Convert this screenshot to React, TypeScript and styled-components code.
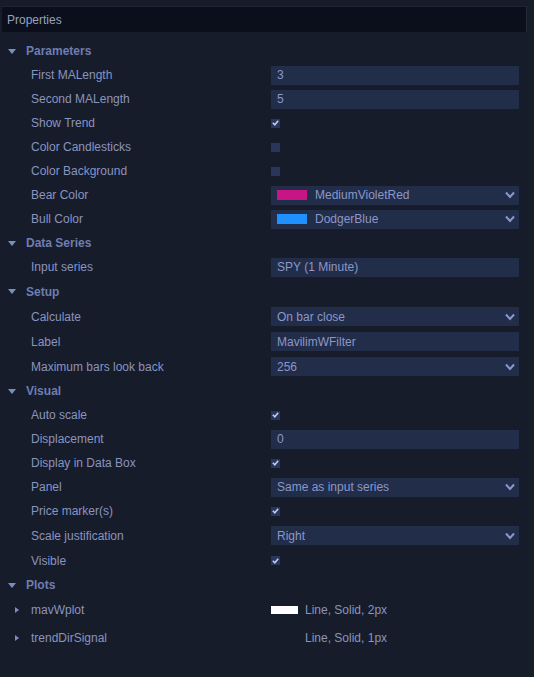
import React from 'react';
import styled, { createGlobalStyle } from 'styled-components';

const GlobalStyle = createGlobalStyle`
	html, body {
		margin: 0;
		padding: 0;
		background: #161c2a;
	}
	body {
		font-family: "Liberation Sans", Arial, sans-serif;
		font-size: 12px;
	}
`;

const Panel = styled.div`
	width: 534px;
	height: 677px;
	background: #161c2a;
	padding-top: 6px;
	box-sizing: border-box;
	overflow: hidden;
`;

const TitleBar = styled.div`
	margin: 0 7px 0 2px;
	height: 26px;
	background: #0a0f1b;
	border-top: 1px solid #1c2333;
	border-right: 1px solid #232a3a;
	display: flex;
	align-items: center;
	padding-left: 5px;
	color: #98a1bf;
	font-size: 12px;
	box-sizing: border-box;
`;

const List = styled.div`
	display: flex;
	flex-direction: column;
	padding-top: 7px;
`;

const SectionHeader = styled.div<{ h?: number }>`
	height: ${({ h }) => h || 24}px;
	display: flex;
	align-items: center;
	padding-left: 8px;
	gap: 10px;
	color: #6e7db2;
	font-weight: bold;
	font-size: 12px;
`;

const Row = styled.div<{ h?: number }>`
	height: ${({ h }) => h || 24}px;
	display: grid;
	grid-template-columns: 271px 248px;
	align-items: center;
`;

const Label = styled.div<{ expander?: boolean }>`
	display: flex;
	align-items: center;
	gap: 12px;
	padding-left: ${({ expander }) => (expander ? '15px' : '31px')};
	color: #8a94bf;
	font-size: 12px;
	white-space: nowrap;
`;

const DownArrow = styled.span`
	width: 0;
	height: 0;
	border-left: 4px solid transparent;
	border-right: 4px solid transparent;
	border-top: 5px solid #7d8cc0;
`;

const RightArrow = styled.span`
	width: 0;
	height: 0;
	border-top: 3.5px solid transparent;
	border-bottom: 3.5px solid transparent;
	border-left: 4px solid #7d8cc0;
`;

const TextBox = styled.div`
	height: 19px;
	background: #222d4a;
	display: flex;
	align-items: center;
	padding-left: 6px;
	color: #8b97c7;
	font-size: 12px;
	box-sizing: border-box;
`;

const Select = styled(TextBox)`
	justify-content: space-between;
	padding-right: 4px;
`;

const SelectValue = styled.div`
	display: flex;
	align-items: center;
	gap: 8px;
`;

const Swatch = styled.span<{ color: string }>`
	width: 30px;
	height: 10px;
	background: ${({ color }) => color};
	display: inline-block;
`;

const Chevron = () => (
	<svg width="10" height="8" viewBox="0 0 10 8">
		<path d="M1 1.5 L5 6 L9 1.5" fill="none" stroke="#8b97d0" strokeWidth="2" />
	</svg>
);

const CheckBox = styled.div`
	width: 9px;
	height: 9px;
	background: #29355a;
	display: flex;
	align-items: center;
	justify-content: center;
`;

const PlotValue = styled.div`
	display: flex;
	align-items: center;
	gap: 7px;
	color: #8a94bf;
	font-size: 12px;
`;

const PlotSwatch = styled.span<{ color?: string }>`
	width: 27px;
	height: 8px;
	background: ${({ color }) => color || 'transparent'};
`;

function Check({ checked }: { checked?: boolean }) {
	return (
		<CheckBox>
			{checked && (
				<svg width="7" height="6" viewBox="0 0 7 6">
					<path d="M0.8 2.8 L2.8 4.8 L6.2 0.8" fill="none" stroke="#c3cbef" strokeWidth="1.6" />
				</svg>
			)}
		</CheckBox>
	);
}

function Section({ title, h }: { title: string; h?: number }) {
	return (
		<SectionHeader h={h}>
			<DownArrow />
			{title}
		</SectionHeader>
	);
}

export default function App() {
	return (
		<Panel>
			<GlobalStyle />
			<TitleBar>Properties</TitleBar>
			<List>
				<Section title="Parameters" />
				<Row>
					<Label>First MALength</Label>
					<TextBox>3</TextBox>
				</Row>
				<Row>
					<Label>Second MALength</Label>
					<TextBox>5</TextBox>
				</Row>
				<Row>
					<Label>Show Trend</Label>
					<Check checked />
				</Row>
				<Row>
					<Label>Color Candlesticks</Label>
					<Check />
				</Row>
				<Row>
					<Label>Color Background</Label>
					<Check />
				</Row>
				<Row>
					<Label>Bear Color</Label>
					<Select>
						<SelectValue>
							<Swatch color="#c71585" />
							MediumVioletRed
						</SelectValue>
						<Chevron />
					</Select>
				</Row>
				<Row>
					<Label>Bull Color</Label>
					<Select>
						<SelectValue>
							<Swatch color="#1e90ff" />
							DodgerBlue
						</SelectValue>
						<Chevron />
					</Select>
				</Row>

				<Section title="Data Series" />
				<Row>
					<Label>Input series</Label>
					<TextBox>SPY (1 Minute)</TextBox>
				</Row>

				<Section title="Setup" h={25} />
				<Row h={25}>
					<Label>Calculate</Label>
					<Select>
						On bar close
						<Chevron />
					</Select>
				</Row>
				<Row h={25}>
					<Label>Label</Label>
					<TextBox>MavilimWFilter</TextBox>
				</Row>
				<Row h={25}>
					<Label>Maximum bars look back</Label>
					<Select>
						256
						<Chevron />
					</Select>
				</Row>

				<Section title="Visual" />
				<Row>
					<Label>Auto scale</Label>
					<Check checked />
				</Row>
				<Row>
					<Label>Displacement</Label>
					<TextBox>0</TextBox>
				</Row>
				<Row>
					<Label>Display in Data Box</Label>
					<Check checked />
				</Row>
				<Row>
					<Label>Panel</Label>
					<Select>
						Same as input series
						<Chevron />
					</Select>
				</Row>
				<Row>
					<Label>Price marker(s)</Label>
					<Check checked />
				</Row>
				<Row h={25}>
					<Label>Scale justification</Label>
					<Select>
						Right
						<Chevron />
					</Select>
				</Row>
				<Row h={25}>
					<Label>Visible</Label>
					<Check checked />
				</Row>

				<Section title="Plots" />
				<Row h={26}>
					<Label expander>
						<RightArrow />
						mavWplot
					</Label>
					<PlotValue>
						<PlotSwatch color="#ffffff" />
						Line, Solid, 2px
					</PlotValue>
				</Row>
				<Row h={30}>
					<Label expander>
						<RightArrow />
						trendDirSignal
					</Label>
					<PlotValue>
						<PlotSwatch />
						Line, Solid, 1px
					</PlotValue>
				</Row>
			</List>
		</Panel>
	);
}
